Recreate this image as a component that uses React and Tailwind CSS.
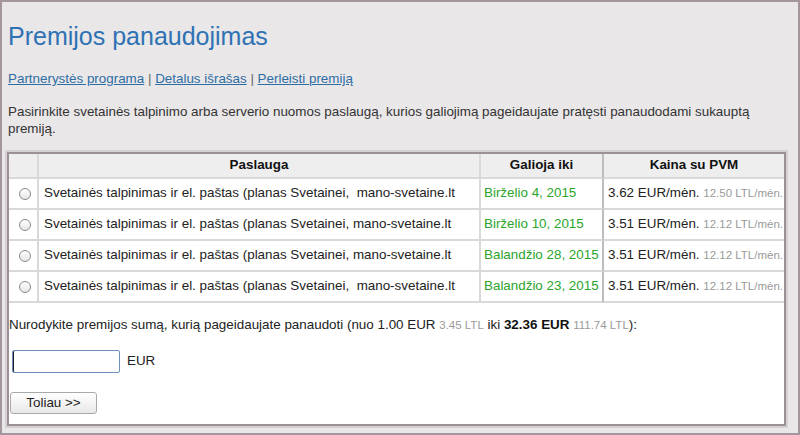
import React from "react";

const rows = [
  { sp: true, date: "Birželio 4, 2015", eur: "3.62", ltl: "12.50" },
  { sp: false, date: "Birželio 10, 2015", eur: "3.51", ltl: "12.12" },
  { sp: false, date: "Balandžio 28, 2015", eur: "3.51", ltl: "12.12" },
  { sp: true, date: "Balandžio 23, 2015", eur: "3.51", ltl: "12.12" },
];

const Radio = () => (
  <span className="inline-block w-[12px] h-[12px] rounded-full border border-[#8a8a8a] bg-gradient-to-b from-[#ffffff] to-[#e6e6e6] align-middle" />
);

export default function App() {
  return (
    <div className="w-[800px] h-[435px] overflow-hidden bg-[#e9e7e8] border-2 border-[#a3979d] font-['Liberation_Sans',Arial,sans-serif] text-[13.4px] text-[#333]">
      <div className="pl-[6px] pr-[6px]">
        <h1 className="mt-[19px] text-[25px] leading-[30px] text-[#2f72b4] font-normal">
          Premijos panaudojimas
        </h1>

        <div className="mt-[19px] leading-[18px] text-[#666]">
          <a href="#" className="text-[#2e6da4] underline">Partnerystės programa</a>
          {" | "}
          <a href="#" className="text-[#2e6da4] underline">Detalus išrašas</a>
          {" | "}
          <a href="#" className="text-[#2e6da4] underline">Perleisti premiją</a>
        </div>

        <p className="mt-[15px] leading-[17px] w-[770px]">
          Pasirinkite svetainės talpinimo arba serverio nuomos paslaugą, kurios galiojimą pageidaujate pratęsti panaudodami sukauptą premiją.
        </p>
      </div>

      <div className="ml-[5px] mt-[15px] w-[779px] bg-white border-2 border-[#9d9198] shadow-[0_0_0_2px_#d6cfd3]">
        <table className="table-fixed border-separate border-spacing-0 w-[775px]">
          <colgroup>
            <col className="w-[30px]" />
            <col className="w-[442px]" />
            <col className="w-[123px]" />
            <col className="w-[180px]" />
          </colgroup>
          <thead>
            <tr className="h-[25px] bg-[#eeeeee] text-[#111]">
              <th className="border-r-2 border-b-2 border-[#d9d9d9]"></th>
              <th className="border-r-2 border-b-2 border-[#d9d9d9] font-bold text-center">Paslauga</th>
              <th className="border-r-2 border-b-2 border-[#d9d9d9] border-r-[#bdbdbd] font-bold text-center">Galioja iki</th>
              <th className="border-b-2 border-[#d9d9d9] font-bold text-center">Kaina su PVM</th>
            </tr>
          </thead>
          <tbody>
            {rows.map((r, i) => (
              <tr key={i} className="h-[31px] text-[#222]">
                <td className="border-r-2 border-b-2 border-[#d9d9d9] text-center pl-[3px]">
                  <Radio />
                </td>
                <td className="border-r-2 border-b-2 border-[#d9d9d9] pl-[5px] whitespace-nowrap overflow-hidden">
                  Svetainės talpinimas ir el. paštas (planas Svetainei,{r.sp ? "\u00a0 " : " "}mano-svetaine.lt
                </td>
                <td className="border-r-2 border-b-2 border-[#d9d9d9] border-r-[#bdbdbd] pl-[3px] whitespace-nowrap overflow-hidden text-[#2aa52a]">
                  {r.date}
                </td>
                <td className="border-b-2 border-[#d9d9d9] pl-[4px] whitespace-nowrap overflow-hidden">
                  {r.eur} EUR/mėn. <span className="text-[11.5px] text-[#9a9a9a]">{r.ltl} LTL/mėn.</span>
                </td>
              </tr>
            ))}
          </tbody>
        </table>

        <p className="mt-[13px] leading-[18px] text-[#222]">
          Nurodykite premijos sumą, kurią pageidaujate panaudoti (nuo 1.00 EUR{" "}
          <span className="text-[11.5px] text-[#9a9a9a]">3.45 LTL</span> iki{" "}
          <b className="text-[#111]">32.36 EUR</b>{" "}
          <span className="text-[11.5px] text-[#9a9a9a]">111.74 LTL</span>):
        </p>

        <div className="mt-[16px] ml-[3px] flex items-center gap-[7px]">
          <input
            type="text"
            className="w-[108px] h-[23px] border border-[#6f8fbd] rounded-[2px] bg-white px-[2px] outline-none shadow-[inset_1px_0_0_#1a1a1a]"
          />
          <span className="text-[#222]">EUR</span>
        </div>

        <button className="mt-[19px] mb-[10px] ml-[1px] w-[87px] h-[22px] border border-[#a9a9a9] rounded-[3px] bg-gradient-to-b from-[#ffffff] to-[#e8e8e8] text-[13.4px] text-[#222] block">
          Toliau &gt;&gt;
        </button>
      </div>
    </div>
  );
}
